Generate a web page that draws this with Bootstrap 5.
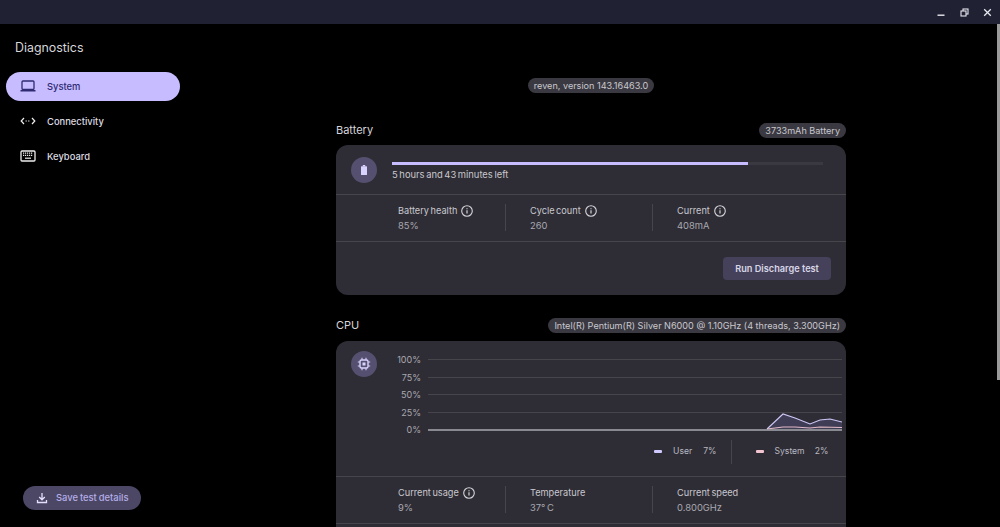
<!DOCTYPE html>
<html lang="en">
<head>
<meta charset="utf-8">
<title>Diagnostics</title>
<link href="https://cdn.jsdelivr.net/npm/bootstrap@5.3.0/dist/css/bootstrap.min.css" rel="stylesheet">
<style>
html,body{height:100%;overflow:hidden;background:#000}
body{font-family:Inter,"Liberation Sans",sans-serif;font-size:9.4px;word-spacing:-1px;color:#c9c8ce;position:relative;line-height:15px}
.titlebar{height:24px;background:#202132;gap:14px;padding-right:8px}
.shell{height:503px;overflow:hidden}
.side{width:180px;flex:none}
.apptitle{font-size:12.4px;color:#d6d5da;padding:15px 0 0 15px;height:48px;line-height:17px;margin-bottom:0;word-spacing:0}
.navitem{height:29px;margin:0 0 6px 6px;border-radius:15px;padding-left:13px;gap:10px;color:#dddce2;font-weight:500;font-size:9.4px;text-decoration:none;padding-bottom:1px}
.navitem.on{background:#c6bcff;color:#2f2a72}
.savebtn{margin:0 0 17px 23px;width:118px;height:24px;border-radius:12px;background:#4b4765;color:#b6aee8;font-weight:500;font-size:9.4px;border:0;gap:8px;padding:0 0 0 13px;word-spacing:-.5px}
.pane{width:510px;height:503px;overflow:hidden;margin-left:156px;padding-top:54px}
.verpill,.specpill{background:#3a3941;border-radius:8px;padding:0 6px;height:15px;line-height:15px;color:#c9c8ce;font-size:9.1px;white-space:nowrap;word-spacing:0}
.sechead{height:15px;margin-top:30px;margin-bottom:7px;font-size:11px;color:#d6d5da;word-spacing:0}
.sechead.cpuhead{margin-top:23px;margin-bottom:8px}
.panel{background:#2e2d35;border-radius:12px}
.panel.tall{padding-bottom:48px}
.roundic{width:26px;height:26px;border-radius:50%;background:#55506f;flex:none}
.toprow{height:50px;padding:12px 23px 0 15px;gap:15px;border-bottom:1px solid #46454c}
.track{height:3px;background:#3a3941;margin:5px 0 2px}
.fill{height:3px;background:#c6bcff}
.statrow{height:47px;padding-top:9px;border-bottom:1px solid #46454c}
.statcell{height:27px;padding-left:24px;border-right:1px solid #46454c}
.statcell.c1{width:170px;padding-left:62px}
.statcell.c2{width:147px}
.statcell.c3{border-right:0;flex:1}
.statlabel{gap:4px;height:14px;line-height:14px;color:#c9c8ce;font-size:9.2px}
.statval{height:16px;line-height:15px;color:#a9a8b0;margin-top:0}
.actrow{height:53px;padding:15px 15px 0 0}
.runbtn{width:108px;height:23px;border-radius:4px;background:#45415a;color:#d8d6e6;border:0;font-weight:600;font-size:9.2px;padding:0;word-spacing:0}
.chartrow{padding:10px 4px 0 15px;height:94px;gap:0}
.ylabs{width:44px;text-align:right;color:#a9a8b0;font-size:9px;flex:none;word-spacing:0}
.ylabs div{height:17.6px;line-height:17px}
.plot{width:414px;height:80px;margin-left:7px;flex:none;display:block}
.legendrow{height:42px;padding-bottom:8px;border-bottom:1px solid #46454c;padding-left:318px;color:#b9b8c0;font-size:8.6px}
.dash{width:8px;height:3px;border-radius:1px;flex:none}
.legcell{height:24px}
.sbthumb{position:absolute;right:0;top:24px;width:3px;height:356px;background:#9a9a9a}
</style>
</head>
<body>
<div class="titlebar d-flex align-items-center justify-content-end">
  <svg width="9" height="9" viewBox="0 0 9 9"><rect x="0.5" y="6.5" width="7" height="1.4" fill="#e8e8f0"/></svg>
  <svg width="9" height="9" viewBox="0 0 9 9" fill="none" stroke="#e8e8f0" stroke-width="1.1"><rect x="3" y="1" width="5" height="5"/><rect x="1" y="3" width="5" height="5" fill="#202132"/></svg>
  <svg width="9" height="9" viewBox="0 0 9 9" stroke="#e8e8f0" stroke-width="1.3"><path d="M1.2 1.2l6.6 6.6M7.8 1.2L1.2 7.8"/></svg>
</div>
<div class="shell d-flex">
  <aside class="side d-flex flex-column">
    <h1 class="apptitle fw-normal">Diagnostics</h1>
    <a class="navitem on d-flex align-items-center" href="#">
      <svg width="18" height="14" viewBox="0 0 18 14" fill="none"><rect x="3" y="2" width="12" height="8.5" rx="1" stroke="#2f2a72" stroke-width="1.3"/><rect x="1.5" y="11" width="15" height="1.5" fill="#2f2a72"/></svg>
      <span>System</span></a>
    <a class="navitem d-flex align-items-center" href="#">
      <svg width="18" height="14" viewBox="0 0 18 14" fill="none" stroke="#eee" stroke-width="1.2"><path d="M5 4L2.2 7 5 10M13 4l2.8 3L13 10"/><path d="M6.5 7h5" stroke-dasharray="1.3 1.3"/></svg>
      <span>Connectivity</span></a>
    <a class="navitem d-flex align-items-center" href="#">
      <svg width="18" height="14" viewBox="0 0 18 14"><rect x="2" y="2" width="14" height="10" rx="1" fill="none" stroke="#eee" stroke-width="1.3"/><path d="M4 4.2h10M4 6.4h10" stroke="#eee" stroke-width="1.2" stroke-dasharray="1.2 .8"/><path d="M6 9.2h6" stroke="#eee" stroke-width="1.2"/></svg>
      <span>Keyboard</span></a>
    <button type="button" class="savebtn btn d-flex align-items-center mt-auto">
      <svg width="12" height="12" viewBox="0 0 12 12" fill="none" stroke="#e4dfff" stroke-width="1.3"><path d="M6 1v6.5M3.2 5L6 7.8 8.8 5"/><path d="M1.5 8v2.5h9V8"/></svg>
      <span>Save test details</span></button>
  </aside>
  <main class="pane">
    <div class="d-flex justify-content-center"><span class="verpill">reven, version 143.16463.0</span></div>

    <div class="sechead d-flex justify-content-between align-items-center"><span>Battery</span><span class="specpill">3733mAh Battery</span></div>
    <section class="panel">
      <div class="toprow d-flex">
        <div class="roundic d-flex align-items-center justify-content-center">
          <svg width="10" height="12" viewBox="0 0 10 12"><rect x="3.8" y="1" width="2.4" height="1.4" fill="#d9d3ff"/><rect x="2" y="2.2" width="6" height="8.8" rx=".6" fill="#d9d3ff"/></svg>
        </div>
        <div class="flex-grow-1">
          <div class="track"><div class="fill" style="width:82.6%"></div></div>
          <div>5 hours and 43 minutes left</div>
        </div>
      </div>
      <div class="statrow d-flex">
        <div class="statcell c1"><div class="statlabel d-flex align-items-center">Battery health <svg width="12" height="12" viewBox="0 0 12 12" fill="none" stroke="#d5d4da" stroke-width="1.1"><circle cx="6" cy="6" r="5.3"/><path d="M6 5.3v3.2M6 3.2v1.1" stroke-width="1.2"/></svg></div><div class="statval">85%</div></div>
        <div class="statcell c2"><div class="statlabel d-flex align-items-center">Cycle count <svg width="12" height="12" viewBox="0 0 12 12" fill="none" stroke="#d5d4da" stroke-width="1.1"><circle cx="6" cy="6" r="5.3"/><path d="M6 5.3v3.2M6 3.2v1.1" stroke-width="1.2"/></svg></div><div class="statval">260</div></div>
        <div class="statcell c3"><div class="statlabel d-flex align-items-center">Current <svg width="12" height="12" viewBox="0 0 12 12" fill="none" stroke="#d5d4da" stroke-width="1.1"><circle cx="6" cy="6" r="5.3"/><path d="M6 5.3v3.2M6 3.2v1.1" stroke-width="1.2"/></svg></div><div class="statval">408mA</div></div>
      </div>
      <div class="actrow d-flex justify-content-end"><button type="button" class="runbtn btn">Run Discharge test</button></div>
    </section>

    <div class="sechead cpuhead d-flex justify-content-between align-items-center"><span>CPU</span><span class="specpill">Intel(R) Pentium(R) Silver N6000 @ 1.10GHz (4 threads, 3.300GHz)</span></div>
    <section class="panel tall">
      <div class="chartrow d-flex">
        <div class="roundic d-flex align-items-center justify-content-center">
          <svg width="14" height="14" viewBox="0 0 14 14" fill="none" stroke="#d9d3ff"><rect x="3" y="3" width="8" height="8" rx="1.5" stroke-width="1.4"/><rect x="5.5" y="5.5" width="3" height="3" fill="#d9d3ff" stroke="none"/><path d="M5 .8v2M9 .8v2M5 11.2v2M9 11.2v2M.8 5h2M.8 9h2M11.2 5h2M11.2 9h2" stroke-width="1.1"/></svg>
        </div>
        <div class="ylabs"><div>100%</div><div>75%</div><div>50%</div><div>25%</div><div>0%</div></div>
        <svg class="plot" viewBox="0 0 414 80">
          <g stroke="#46454c" stroke-width="1"><path d="M0 8.5h414M0 26.5h414M0 43.5h414M0 61.5h414"/></g>
          <path d="M339 78L355 63 367 67 382 73 392 69 402 68 414 71V78Z" fill="#3f3d56"/>
          <path d="M339 78L355 63 367 67 382 73 392 69 402 68 414 71" fill="none" stroke="#cdc7f5" stroke-width="1.1"/>
          <path d="M339 78L355 76 367 76 382 77 392 76 414 76.5" fill="none" stroke="#e3bcc8" stroke-width="1.2"/>
          <path d="M0 79h414" stroke="#a9a8b0" stroke-width="1.6"/>
        </svg>
      </div>
      <div class="legendrow d-flex align-items-center">
        <i class="dash" style="background:#cfcaff"></i><span style="margin-left:11px">User</span><span style="margin-left:11px">7%</span>
        <span class="legcell" style="border-left:1px solid #46454c;margin-left:14px"></span>
        <i class="dash" style="background:#f2c4d0;margin-left:24px"></i><span style="margin-left:11px">System</span><span style="margin-left:10px">2%</span>
      </div>
      <div class="statrow d-flex">
        <div class="statcell c1"><div class="statlabel d-flex align-items-center">Current usage <svg width="12" height="12" viewBox="0 0 12 12" fill="none" stroke="#d5d4da" stroke-width="1.1"><circle cx="6" cy="6" r="5.3"/><path d="M6 5.3v3.2M6 3.2v1.1" stroke-width="1.2"/></svg></div><div class="statval">9%</div></div>
        <div class="statcell c2"><div class="statlabel">Temperature</div><div class="statval">37° C</div></div>
        <div class="statcell c3"><div class="statlabel">Current speed</div><div class="statval">0.800GHz</div></div>
      </div>
    </section>
  </main>
</div>
<div class="sbthumb"></div>
<script src="https://cdn.jsdelivr.net/npm/bootstrap@5.3.0/dist/js/bootstrap.bundle.min.js"></script>
</body>
</html>
